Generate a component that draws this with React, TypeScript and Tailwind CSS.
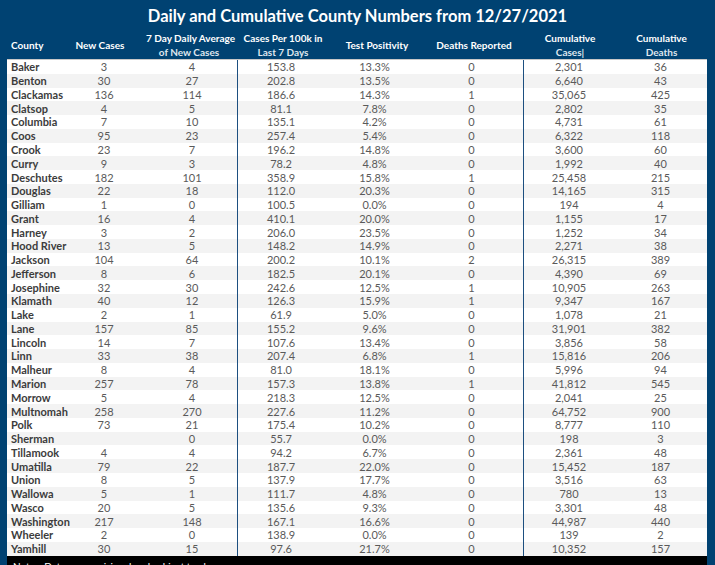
import React from "react";

const rows: [string, string, string, string, string, string, string, string][] = [
  ["Baker", "3", "4", "153.8", "13.3%", "0", "2,301", "36"],
  ["Benton", "30", "27", "202.8", "13.5%", "0", "6,640", "43"],
  ["Clackamas", "136", "114", "186.6", "14.3%", "1", "35,065", "425"],
  ["Clatsop", "4", "5", "81.1", "7.8%", "0", "2,802", "35"],
  ["Columbia", "7", "10", "135.1", "4.2%", "0", "4,731", "61"],
  ["Coos", "95", "23", "257.4", "5.4%", "0", "6,322", "118"],
  ["Crook", "23", "7", "196.2", "14.8%", "0", "3,600", "60"],
  ["Curry", "9", "3", "78.2", "4.8%", "0", "1,992", "40"],
  ["Deschutes", "182", "101", "358.9", "15.8%", "1", "25,458", "215"],
  ["Douglas", "22", "18", "112.0", "20.3%", "0", "14,165", "315"],
  ["Gilliam", "1", "0", "100.5", "0.0%", "0", "194", "4"],
  ["Grant", "16", "4", "410.1", "20.0%", "0", "1,155", "17"],
  ["Harney", "3", "2", "206.0", "23.5%", "0", "1,252", "34"],
  ["Hood River", "13", "5", "148.2", "14.9%", "0", "2,271", "38"],
  ["Jackson", "104", "64", "200.2", "10.1%", "2", "26,315", "389"],
  ["Jefferson", "8", "6", "182.5", "20.1%", "0", "4,390", "69"],
  ["Josephine", "32", "30", "242.6", "12.5%", "1", "10,905", "263"],
  ["Klamath", "40", "12", "126.3", "15.9%", "1", "9,347", "167"],
  ["Lake", "2", "1", "61.9", "5.0%", "0", "1,078", "21"],
  ["Lane", "157", "85", "155.2", "9.6%", "0", "31,901", "382"],
  ["Lincoln", "14", "7", "107.6", "13.4%", "0", "3,856", "58"],
  ["Linn", "33", "38", "207.4", "6.8%", "1", "15,816", "206"],
  ["Malheur", "8", "4", "81.0", "18.1%", "0", "5,996", "94"],
  ["Marion", "257", "78", "157.3", "13.8%", "1", "41,812", "545"],
  ["Morrow", "5", "4", "218.3", "12.5%", "0", "2,041", "25"],
  ["Multnomah", "258", "270", "227.6", "11.2%", "0", "64,752", "900"],
  ["Polk", "73", "21", "175.4", "10.2%", "0", "8,777", "110"],
  ["Sherman", "", "0", "55.7", "0.0%", "0", "198", "3"],
  ["Tillamook", "4", "4", "94.2", "6.7%", "0", "2,361", "48"],
  ["Umatilla", "79", "22", "187.7", "22.0%", "0", "15,452", "187"],
  ["Union", "8", "5", "137.9", "17.7%", "0", "3,516", "63"],
  ["Wallowa", "5", "1", "111.7", "4.8%", "0", "780", "13"],
  ["Wasco", "20", "5", "135.6", "9.3%", "0", "3,301", "48"],
  ["Washington", "217", "148", "167.1", "16.6%", "0", "44,987", "440"],
  ["Wheeler", "2", "0", "138.9", "0.0%", "0", "139", "2"],
  ["Yamhill", "30", "15", "97.6", "21.7%", "0", "10,352", "157"],
];

const grid = "grid grid-cols-[55px_84px_92px_90px_94px_102px_92px_91px]";

export default function App() {
  return (
    <div
      className="w-[715px] h-[565px] bg-[#004272] overflow-hidden flex flex-col"
      style={{ fontFamily: "Lato, 'Open Sans', sans-serif" }}
    >
      <div className="h-[31px] shrink-0 flex items-center justify-center pt-[1px]">
        <h1 className="text-white font-bold text-[16.5px] leading-none">
          Daily and Cumulative County Numbers from 12/27/2021
        </h1>
      </div>
      <div
        className={`${grid} ml-[7px] w-[700px] h-[28px] shrink-0 items-center text-white font-bold text-[10px] leading-[14px] whitespace-nowrap`}
      >
        <div className="pl-[4px]">County</div>
        <div className="text-center pr-[8px]">New Cases</div>
        <div className="text-center pr-[6px]">
          <div>7 Day Daily Average</div>
          <div className="text-[#dfe6ee]">of New Cases</div>
        </div>
        <div className="text-center">
          <div>Cases Per 100k in</div>
          <div className="text-[#dfe6ee]">Last 7 Days</div>
        </div>
        <div className="text-center pl-[4px]">Test Positivity</div>
        <div className="text-center pl-[2px]">Deaths Reported</div>
        <div className="text-center">
          <div>Cumulative</div>
          <div className="text-[#dfe6ee]">Cases|</div>
        </div>
        <div className="text-center">
          <div>Cumulative</div>
          <div className="text-[#dfe6ee]">Deaths</div>
        </div>
      </div>
      <div className="ml-[7px] w-[700px] shrink-0 border-t border-[#c8c8c8] bg-white">
        {rows.map((r, i) => (
          <div
            key={r[0]}
            className={`${grid} h-[13.78px] items-center text-[11px] leading-none ${i % 2 === 0 ? "bg-white" : "bg-[#f3f3f3]"}`}
          >
            <div className="pl-[4px] font-bold text-[#3c3c3c] whitespace-nowrap">{r[0]}</div>
            <div className="text-center text-[#5a5a5a]">{r[1]}</div>
            <div className="text-center text-[#5a5a5a] h-full flex items-center justify-center border-r border-[#1d4f80] pl-[1px]">
              {r[2]}
            </div>
            <div className="text-center text-[#5a5a5a] pr-[4px]">{r[3]}</div>
            <div className="text-center text-[#5a5a5a] pr-[1px]">{r[4]}</div>
            <div className="text-center text-[#5a5a5a] h-full flex items-center justify-center border-r border-[#1d4f80] pr-[2px]">
              {r[5]}
            </div>
            <div className="text-center text-[#5a5a5a] pr-[2px]">{r[6]}</div>
            <div className="text-center text-[#5a5a5a] pr-[2px]">{r[7]}</div>
          </div>
        ))}
      </div>
      <div className="ml-[7px] w-[700px] flex-1 bg-black overflow-hidden pl-[6px] pt-[5px] text-white text-[10px] leading-none whitespace-nowrap">
        Notes: Data are provisional and subject to change.
      </div>
    </div>
  );
}
